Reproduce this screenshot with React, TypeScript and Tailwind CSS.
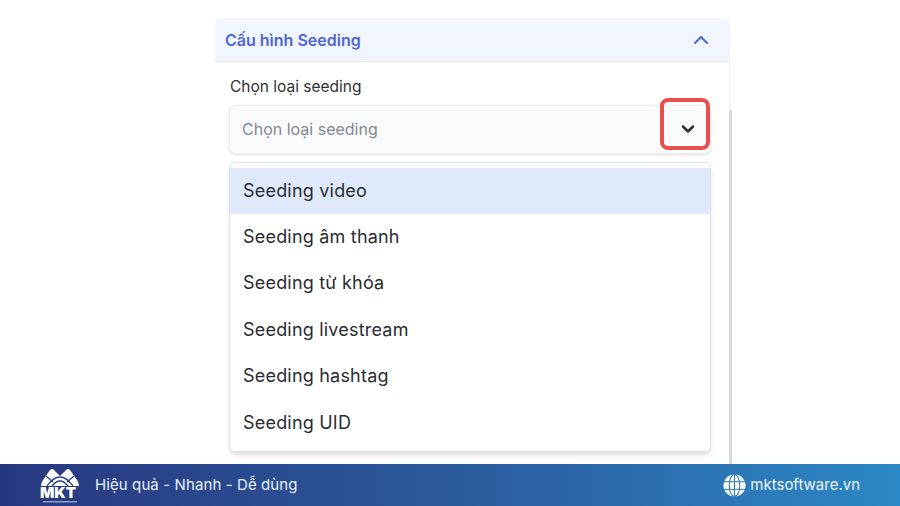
import React from "react";
import { ChevronDown, ChevronUp } from "lucide-react";

const options = [
  "Seeding video",
  "Seeding âm thanh",
  "Seeding từ khóa",
  "Seeding livestream",
  "Seeding hashtag",
  "Seeding UID",
];

const MktLogo = () => (
  <svg width="40" height="38" viewBox="0 0 40 38" fill="#ffffff">
    <path d="M1 20 Q1 17 3 14 L10 4 Q12 2 14 4 L20 10 L26 4 Q28 2 30 4 L37 14 Q39 17 39 20 Z" />
    <g fill="none" stroke="#28408a" strokeWidth="1.3">
      <path d="M7 20 Q20 2 33 20" />
      <path d="M12 20 Q20 10 28 20" />
      <path d="M6 10 L13 16" />
      <path d="M34 10 L27 16" />
    </g>
    <text x="0" y="32" fontSize="15" fontWeight="900" fontFamily="Inter, sans-serif">
      MKT
    </text>
    <rect x="3" y="35" width="34" height="1.5" opacity="0.5" />
  </svg>
);

const GlobeIcon = () => (
  <svg width="23" height="23" viewBox="0 0 24 24">
    <circle cx="12" cy="12" r="11.5" fill="#ffffff" />
    <g fill="none" stroke="#2f7db8" strokeWidth="1.1">
      <ellipse cx="12" cy="12" rx="5.5" ry="11.5" />
      <path d="M12 0.5 V23.5" />
      <path d="M1 8 H23" />
      <path d="M1 16 H23" />
    </g>
  </svg>
);

export default function App() {
  return (
    <div className="w-[900px] h-[506px] flex flex-col overflow-hidden bg-white font-['Inter',sans-serif]">
      <main className="relative h-[464px] pl-[215px] pt-[18px] overflow-hidden">
        <div className="w-[515px] h-full">
          <div className="flex h-[44px] items-center justify-between rounded-t-lg border-b border-[#e6ebf5] bg-[#f1f6fe] pl-[10px] pr-[17px]">
            <span className="text-[16px] font-semibold text-[#4d65d6]">Cấu hình Seeding</span>
            <ChevronUp size={24} strokeWidth={2} className="text-[#4d65d6]" />
          </div>

          <div className="relative h-[402px] border-r border-[#f1f3f7] pl-[14px] pr-[18px] pt-[15px]">
            <label className="block pl-px text-[15.5px] leading-[20px] text-[#303133]">Chọn loại seeding</label>
            <div className="mt-[8px] flex h-[49px] items-center justify-between rounded-md border border-[#eceef2] bg-[#fafbfd] pb-[2px] pl-[12px] pr-[12px] shadow-sm">
              <span className="text-[16px] text-[#85888c]">Chọn loại seeding</span>
              <ChevronDown size={20} strokeWidth={3} className="text-[#2b2d30]" />
            </div>

            <ul className="mt-[8px] h-[290px] rounded-md border border-[#dfe2e8] bg-white pt-[5px] shadow-md">
              {options.map((option, i) => (
                <li
                  key={option}
                  className={`flex h-[46.4px] items-center pl-[13px] pb-[2px] text-[18px] tracking-[0.2px] text-[#2a2c30] ${i === 0 ? "bg-[#deeafb]" : ""}`}
                >
                  {option}
                </li>
              ))}
            </ul>
          </div>
        </div>

        {/* red highlight on the dropdown arrow */}
        <div className="absolute left-[660px] top-[98px] h-[52px] w-[50px] rounded-lg border-[4px] border-[#e8504d]" />
        {/* page scrollbar */}
        <div className="absolute left-[729px] top-[110px] h-[354px] w-[3px] bg-[#d7dade]" />
      </main>

      <footer className="flex h-[42px] items-center justify-between bg-gradient-to-r from-[#27377f] via-[#2b5a9c] to-[#2b88c6] pl-[40px] pr-[40px] text-white">
        <div className="flex items-center gap-[15px]">
          <MktLogo />
          <span className="text-[15px] tracking-[0.1px] text-[#e8f0fa]">Hiệu quả - Nhanh - Dễ dùng</span>
        </div>
        <div className="flex items-center gap-[4px]">
          <GlobeIcon />
          <span className="text-[15px] text-[#eef5fb]">mktsoftware.vn</span>
        </div>
      </footer>
    </div>
  );
}
